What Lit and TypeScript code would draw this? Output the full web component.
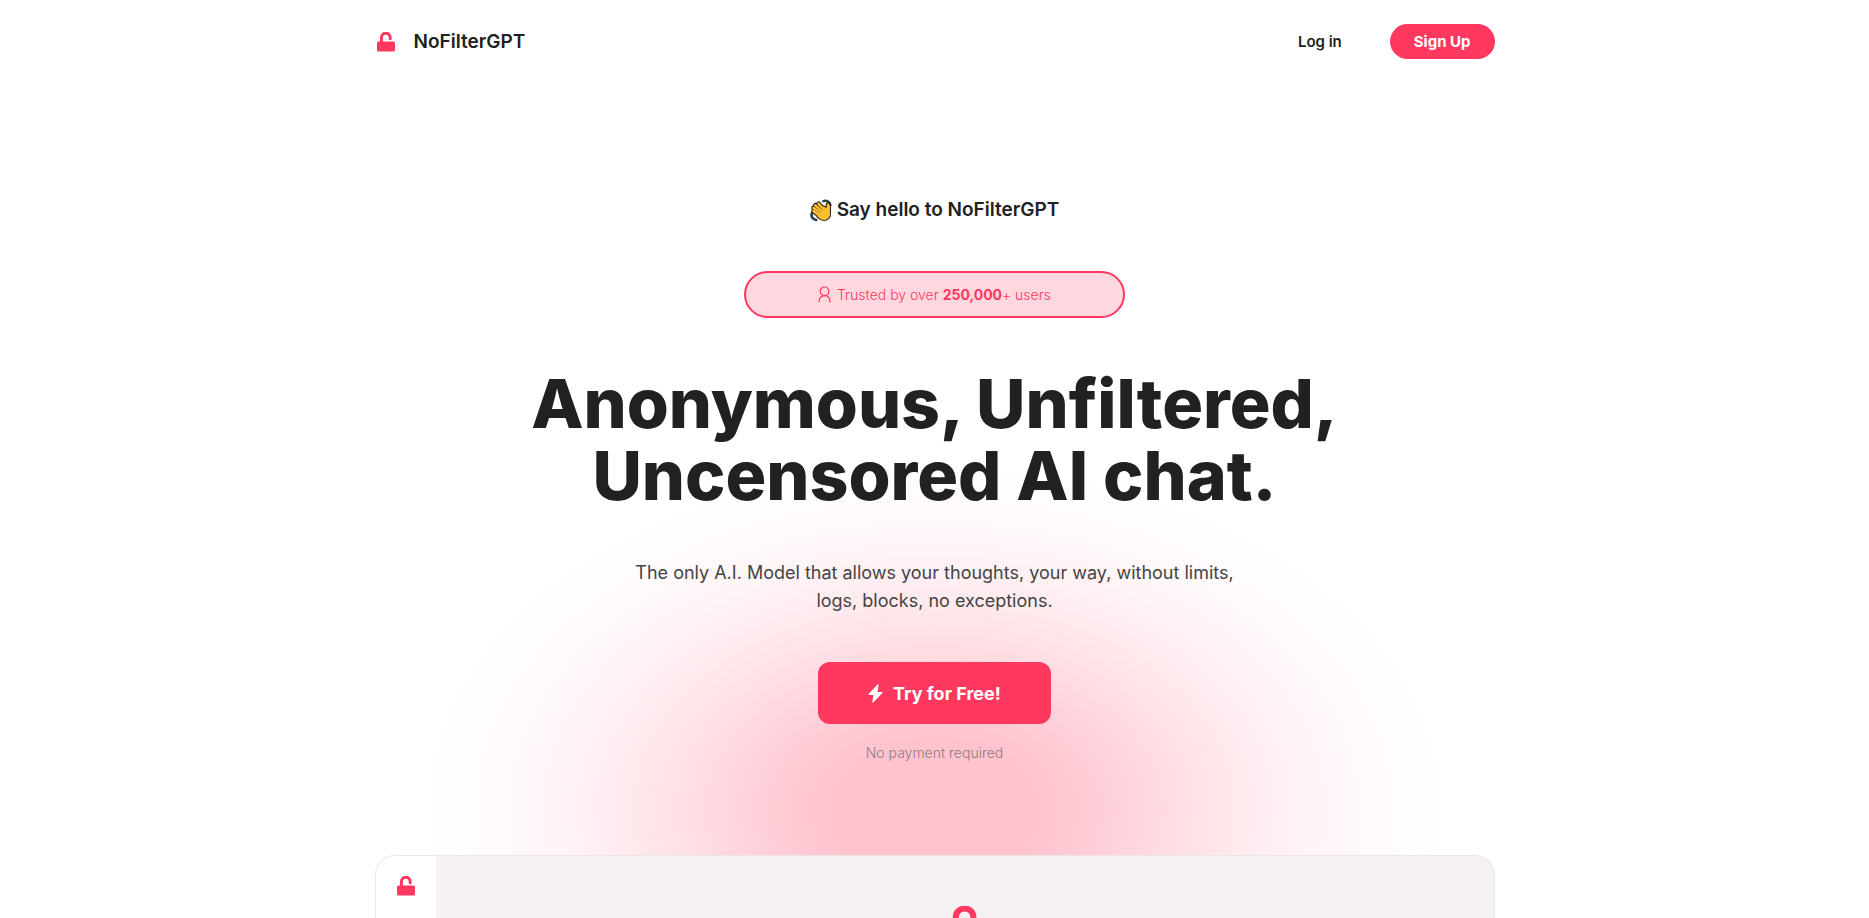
import { LitElement, html, css, svg } from "lit";
import { customElement } from "lit/decorators.js";

const lock = (cls: string) => html`<svg class=${cls} viewBox="0 0 20 20" aria-hidden="true">
  <path d="M5.400 11V5.600a4.400 4.400 0 0 1 8.800 0v1.200" fill="none" stroke="currentColor" stroke-width="3" stroke-linecap="round"/>
  <rect x="1" y="9.500" width="18" height="10" rx="1.600" fill="currentColor"/>
</svg>`;

const handShape = "M3.800 12.600 10 17.500M3.800 9.300 11 15.500M5.600 6.600 13 14M9 5 15 12M18.800 6v8";
const palmShape = "M8 14 14 8l4 2.500 2.200-3.500.3 8c0 4-2.800 6.500-6 6.500-2.500 0-4.500-1.500-6-3z";
const wave = svg`
  <path d="M14 2.200c3.600-1 6.600.8 7.300 4.200M1.800 15c-.8 3.600 1.200 6.400 4.700 7" fill="none" stroke="#1b2a33" stroke-width="2.600" stroke-linecap="round"/>
  <path d="M14 2.200c3.600-1 6.600.8 7.300 4.200M1.800 15c-.8 3.600 1.200 6.400 4.700 7" fill="none" stroke="#2c6076" stroke-width="1" stroke-linecap="round"/>
  <g fill="none" stroke-linecap="round" stroke-linejoin="round">
    <path d=${handShape} stroke="#1d1d1d" stroke-width="5"/>
    <path d=${palmShape} fill="#1d1d1d" stroke="#1d1d1d" stroke-width="3"/>
    <path d=${handShape} stroke="#fcbf2e" stroke-width="2.800"/>
    <path d=${palmShape} fill="#fcbf2e" stroke="#fcbf2e" stroke-width="1"/>
    <path d="M5.500 11.800 9.500 15M6.500 9.200 11.500 13.500M9 7.500 13.500 12" stroke="#b47a17" stroke-width=".8"/>
  </g>`;

@customElement("app-root")
export class AppRoot extends LitElement {
  static styles = css`
    :host {
      display: block;
      height: 100vh;
      overflow: hidden;
      background: #fff;
      color: #212121;
      font-family: Inter, "Liberation Sans", sans-serif;
      font-size: 16px;
    }
    .page {
      display: flex;
      flex-direction: column;
      align-items: center;
      min-height: 100%;
      background: radial-gradient(
        515px 350px at 50% 810px,
        #ffc2ce 0%,
        #ffc3cf 20%,
        #ffccd6 31%,
        #ffdbe2 45%,
        #ffeaee 60%,
        #fff5f7 75%,
        #fffcfd 90%,
        #fff 100%
      );
    }
    header, .preview { width: 100%; max-width: 1120px; }
    header {
      display: flex;
      align-items: center;
      justify-content: space-between;
      padding: 24px 0;
    }
    a { color: inherit; text-decoration: none; }
    .brand { display: flex; align-items: center; gap: 18px; font-size: 19px; font-weight: 600; line-height: 34px; }
    .mark { width: 20px; height: 20px; margin-left: 1px; color: #ff3860; }
    nav { display: flex; align-items: center; gap: 48px; font-size: 15px; line-height: 35px; }
    .login { font-weight: 600; }
    button { border: 0; background: #ff3860; color: #fff; font-family: inherit; cursor: pointer; }
    .signup { height: 35px; padding: 0 24px; border-radius: 18px; font-size: 15px; font-weight: 700; }
    main { display: flex; flex-direction: column; align-items: center; padding-top: 113px; text-align: center; }
    .hello { display: flex; align-items: center; gap: 4px; margin: 0; font-size: 19px; font-weight: 600; line-height: 28px; }
    .wave { width: 23px; height: 23px; }
    .trusted {
      display: flex;
      align-items: center;
      justify-content: center;
      gap: 6px;
      box-sizing: border-box;
      width: 381px;
      height: 47px;
      margin-top: 47px;
      border: 2px solid #ff3860;
      border-radius: 24px;
      background: #ffd7df;
      color: #ff3860;
      font-size: 14px;
      font-weight: 300;
    }
    .trusted b { font-weight: 700; }
    .person { width: 13px; height: 17px; }
    h1 { margin: 49px 0 0; font-size: 68px; font-weight: 800; line-height: 72px; }
    .lead { max-width: 620px; margin: 48px 0 0; color: #444; font-size: 18px; line-height: 28px; }
    .cta {
      display: flex;
      align-items: center;
      justify-content: center;
      gap: 10px;
      width: 233px;
      height: 62px;
      margin-top: 47px;
      border-radius: 12px;
      font-size: 18px;
      font-weight: 700;
    }
    .bolt { width: 15px; height: 19px; }
    .note { margin: 16px 0 0; color: #8f7b80; font-size: 14px; font-weight: 300; line-height: 26px; }
    .preview {
      display: grid;
      grid-template-columns: 60px 1fr;
      flex: 1;
      box-sizing: border-box;
      margin-top: 89px;
      overflow: hidden;
      border: 1px solid #ece6e8;
      border-bottom: 0;
      border-radius: 20px 20px 0 0;
      background: #f5f1f3;
    }
    .side { padding: 20px 0 0 20px; background: #fff; }
    .small { width: 20px; height: 20px; color: #ff3860; }
    .stage { display: flex; justify-content: center; height: 62px; padding-top: 50px; box-sizing: border-box; overflow: hidden; }
    .big { flex: none; width: 40px; height: 40px; color: #ff3860; }
  `;

  render() {
    return html`<div class="page">
      <header>
        <a class="brand" href="#">${lock("mark")}<span>NoFilterGPT</span></a>
        <nav><a class="login" href="#">Log in</a><button class="signup">Sign Up</button></nav>
      </header>
      <main>
        <p class="hello"><svg class="wave" viewBox="0 0 24 24" aria-hidden="true">${wave}</svg><span>Say hello to NoFilterGPT</span></p>
        <div class="trusted">
          <svg class="person" viewBox="0 0 13 17" fill="none" stroke="currentColor" stroke-width="1.2" stroke-linecap="round" aria-hidden="true">
            <circle cx="6.500" cy="5.300" r="4.300"/><path d="M1 16c0-3.200 1.600-6.400 5.500-6.400S12 12.800 12 16"/>
          </svg>
          <span>Trusted by over <b>250,000</b>+ users</span>
        </div>
        <h1>Anonymous, Unfiltered,<br />Uncensored AI chat.</h1>
        <p class="lead">The only A.I. Model that allows your thoughts, your way, without limits,<br />logs, blocks, no exceptions.</p>
        <button class="cta">
          <svg class="bolt" viewBox="0 0 15 19" aria-hidden="true"><path d="M10 1 1 10.500h5.200L4.800 18 14 8.500H8.800z" fill="currentColor" stroke="currentColor" stroke-width="1.200" stroke-linejoin="round"/></svg>
          <span>Try for Free!</span>
        </button>
        <p class="note">No payment required</p>
      </main>
      <section class="preview" aria-label="Chat preview">
        <div class="side">${lock("small")}</div>
        <div class="stage">${lock("big")}</div>
      </section>
    </div>`;
  }
}
